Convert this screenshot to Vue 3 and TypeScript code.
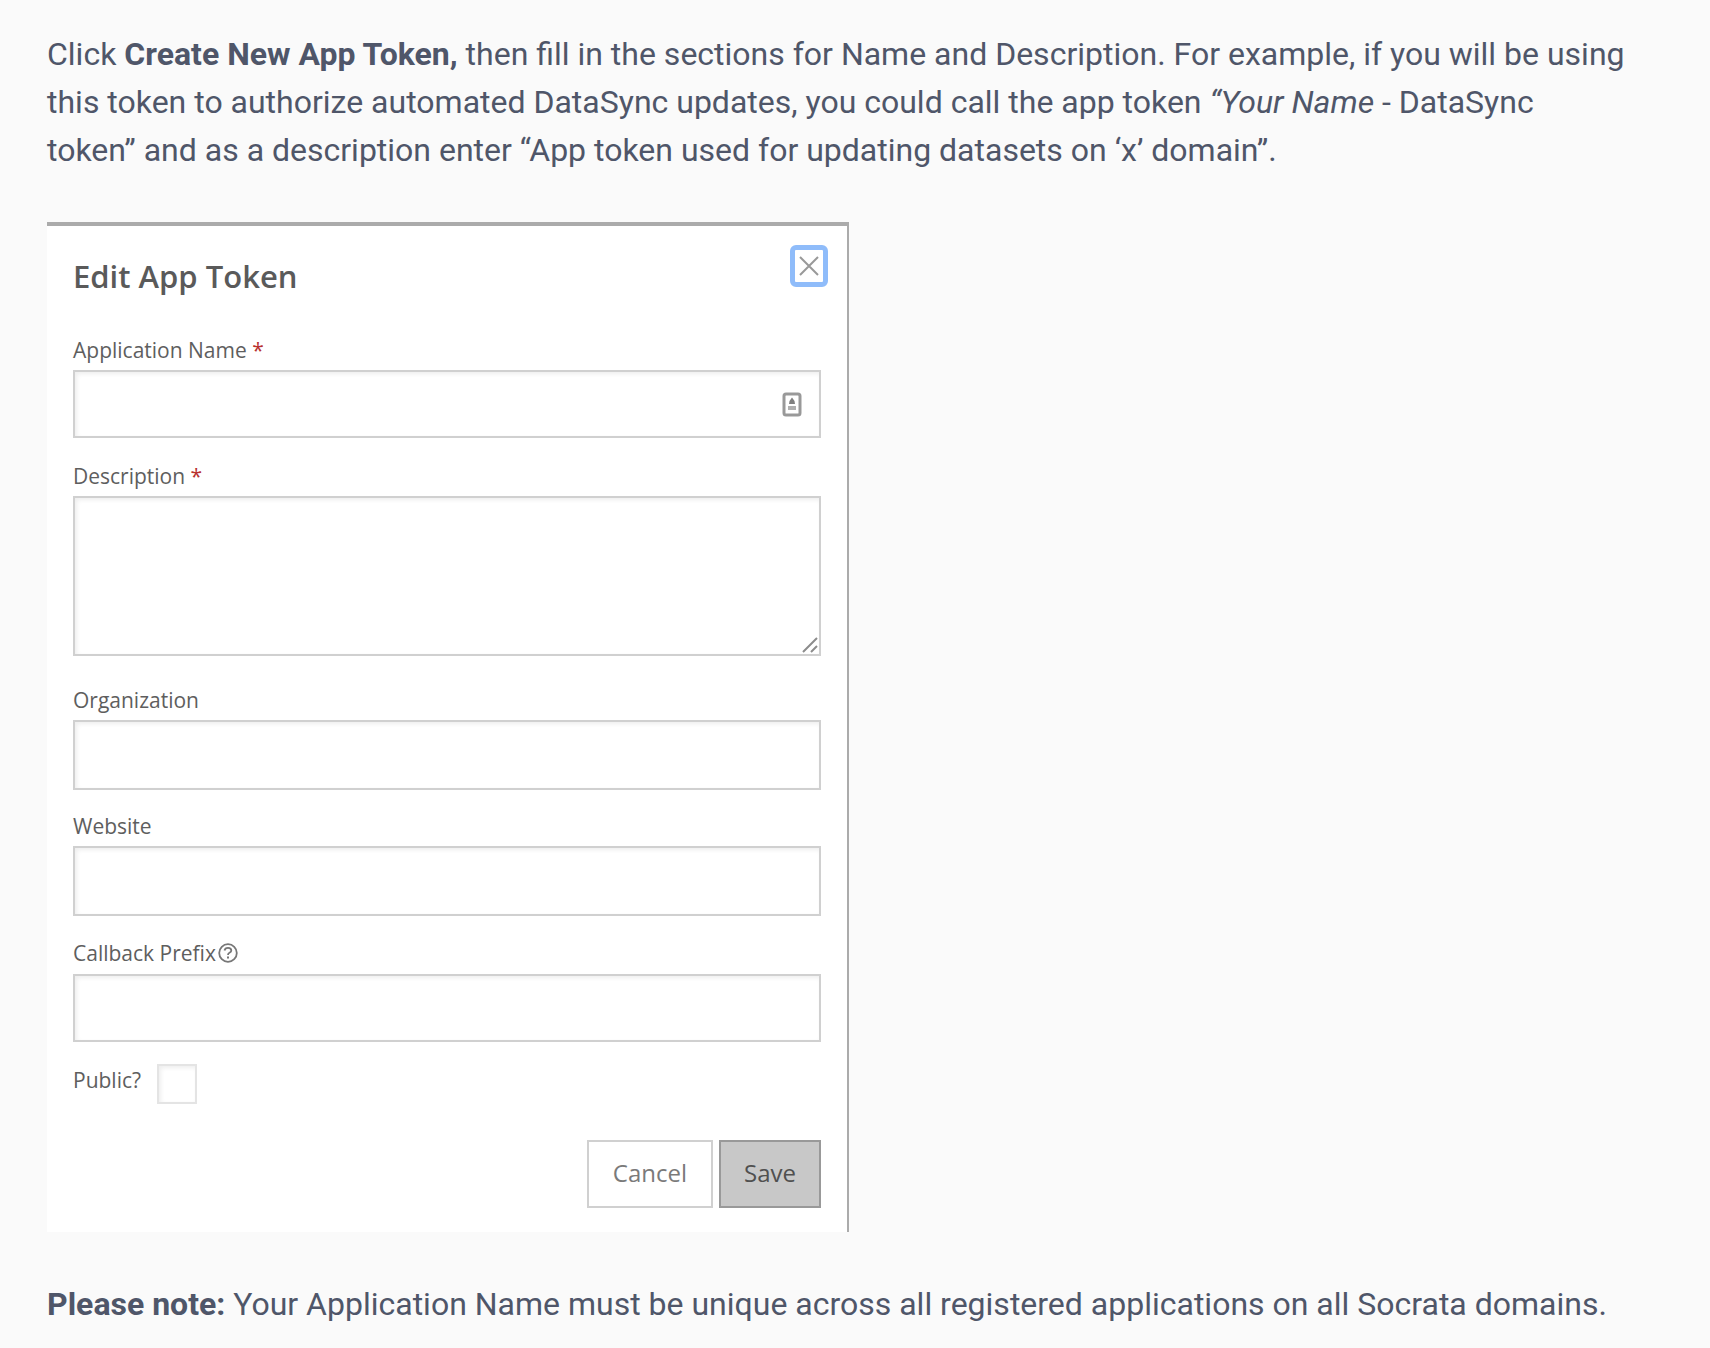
<script setup lang="ts">
import { ref } from 'vue'

const applicationName = ref('')
const description = ref('')
const organization = ref('')
const website = ref('')
const callbackPrefix = ref('')
const isPublic = ref(false)
</script>

<template>
  <main class="article">
    <p>
      Click <strong>Create New App Token,</strong> then fill in the sections for Name and
      Description. For example, if you will be using this token to authorize automated DataSync
      updates, you could call the app token <em>“Your Name</em> - DataSync token” and as a
      description enter “App token used for updating datasets on ‘x’ domain”.
    </p>

    <form class="dialog" @submit.prevent>
      <header class="dialog-head">
        <h2>Edit App Token</h2>
        <button class="close" type="button" aria-label="Close">
          <svg width="20" height="20" viewBox="0 0 20 20">
            <path d="M1 1L19 19M19 1L1 19" stroke="#999" stroke-width="2" fill="none" />
          </svg>
        </button>
      </header>

      <div class="field">
        <label for="app-name">Application Name <span class="required">*</span></label>
        <div class="control">
          <input id="app-name" v-model="applicationName" type="text" />
          <svg class="contact-icon" width="20" height="26" viewBox="0 0 20 26">
            <rect x="2" y="2" width="16" height="21" rx="2" fill="#fff" stroke="#999" stroke-width="3" />
            <path d="M10 5.500L12.500 9L13 12H7L7.500 9Z" fill="#808080" />
            <path d="M6 14H14V18H6Z" fill="#b0b0b0" />
          </svg>
        </div>
      </div>

      <div class="field area">
        <label for="description">Description <span class="required">*</span></label>
        <div class="control">
          <textarea id="description" v-model="description"></textarea>
          <svg class="grip" width="16" height="16" viewBox="0 0 16 16">
            <path d="M1 15L15 1M9 15L15 9" stroke="#8c8c8c" stroke-width="2" fill="none" />
          </svg>
        </div>
      </div>

      <div class="field tall">
        <label for="organization">Organization</label>
        <input id="organization" v-model="organization" type="text" />
      </div>

      <div class="field tall">
        <label for="website">Website</label>
        <input id="website" v-model="website" type="text" />
      </div>

      <div class="field callback">
        <label for="callback"
          ><span>Callback Prefix</span
          ><svg width="20" height="20" viewBox="0 0 20 20">
            <circle cx="10" cy="10" r="8.800" fill="none" stroke="#777" stroke-width="1.800" />
            <path d="M6.500 7.500Q7 4.800 10 4.800Q13.300 4.800 13.300 7.400Q13.300 8.900 11.500 9.800Q10 10.600 10 12" fill="none" stroke="#777" stroke-width="1.800" />
            <path d="M9 13.600H11V15.600H9Z" fill="#777" />
          </svg></label
        >
        <input id="callback" v-model="callbackPrefix" type="text" />
      </div>

      <div class="public">
        <label for="public">Public?</label>
        <input id="public" v-model="isPublic" type="checkbox" />
      </div>

      <footer class="actions">
        <button class="cancel" type="button">Cancel</button>
        <button class="save" type="submit">Save</button>
      </footer>
    </form>

    <p>
      <strong>Please note:</strong> Your Application Name must be unique across all registered
      applications on all Socrata domains.
    </p>
  </main>
</template>

<style>
body {
  margin: 0;
  background: #fafafa;
}
</style>

<style scoped>
* {
  box-sizing: border-box;
}

.article {
  display: flex;
  flex-direction: column;
  gap: 48px;
  padding: 30px 84px 20px 47px;
  color: #4f5669;
  font: 32px/48px Roboto, sans-serif;
}

p {
  margin: 0;
}

strong {
  font-weight: 700;
}

.dialog {
  width: 100%;
  max-width: 802px;
  padding: 19px 26px 24px;
  border-top: 4px solid #ababab;
  border-right: 2px solid #ababab;
  background: #fff;
  color: #5e5e5e;
  font: 21px/28px "Open Sans", sans-serif;
}

.dialog-head {
  display: flex;
  justify-content: space-between;
  align-items: flex-start;
  height: 89px;
}

h2 {
  margin: 11px 0 0;
  color: #5a5a5a;
  font-size: 31px;
  line-height: 40px;
  font-weight: 600;
}

.close {
  display: flex;
  align-items: center;
  justify-content: center;
  width: 38px;
  height: 42px;
  margin-right: -7px;
  padding: 0;
  border: 5px solid #8fbcfa;
  border-radius: 6px;
  background: #fff;
}

.close svg {
  flex: none;
}

.field {
  display: flex;
  flex-direction: column;
  margin-bottom: 22px;
}

.field.area {
  margin-bottom: 28px;
}

.field.tall {
  margin-bottom: 20px;
}

.field label {
  display: flex;
  align-items: center;
  height: 36px;
  padding-bottom: 5px;
  white-space: pre;
}

.field.callback label {
  height: 38px;
}

.callback svg {
  margin-left: 2px;
}

.required {
  color: #b8312f;
}

.control {
  position: relative;
  display: flex;
}

input[type='text'],
textarea {
  width: 100%;
  height: 68px;
  margin: 0;
  padding: 8px 16px;
  border: 2px solid #d0d0d0;
  border-radius: 0;
  background: #fff;
  box-shadow: inset 2px 2px 4px #eee;
  color: inherit;
  font: inherit;
}

.tall input[type='text'] {
  height: 70px;
}

textarea {
  height: 160px;
  resize: none;
}

.contact-icon {
  position: absolute;
  top: 22px;
  right: 19px;
}

.grip {
  position: absolute;
  right: 3px;
  bottom: 3px;
}

.public {
  display: flex;
  align-items: center;
  gap: 16px;
}

.public label {
  padding-bottom: 8px;
}

.public input {
  appearance: none;
  width: 40px;
  height: 40px;
  margin: 0;
  border: 2px solid #e4e4e4;
  background: #fff;
  box-shadow: inset 2px 2px 4px #eee;
}

.actions {
  display: flex;
  justify-content: flex-end;
  gap: 6px;
  margin-top: 36px;
}

.actions button {
  height: 68px;
  padding: 0 24px 2px;
  border: 2px solid #d0d0d0;
  background: #fff;
  color: #7a7a7a;
  font: 24px/32px "Open Sans", sans-serif;
}

.actions .save {
  padding: 0 23px 2px;
  border-color: #999;
  background: #c8c8c8;
  color: #505050;
}
</style>
